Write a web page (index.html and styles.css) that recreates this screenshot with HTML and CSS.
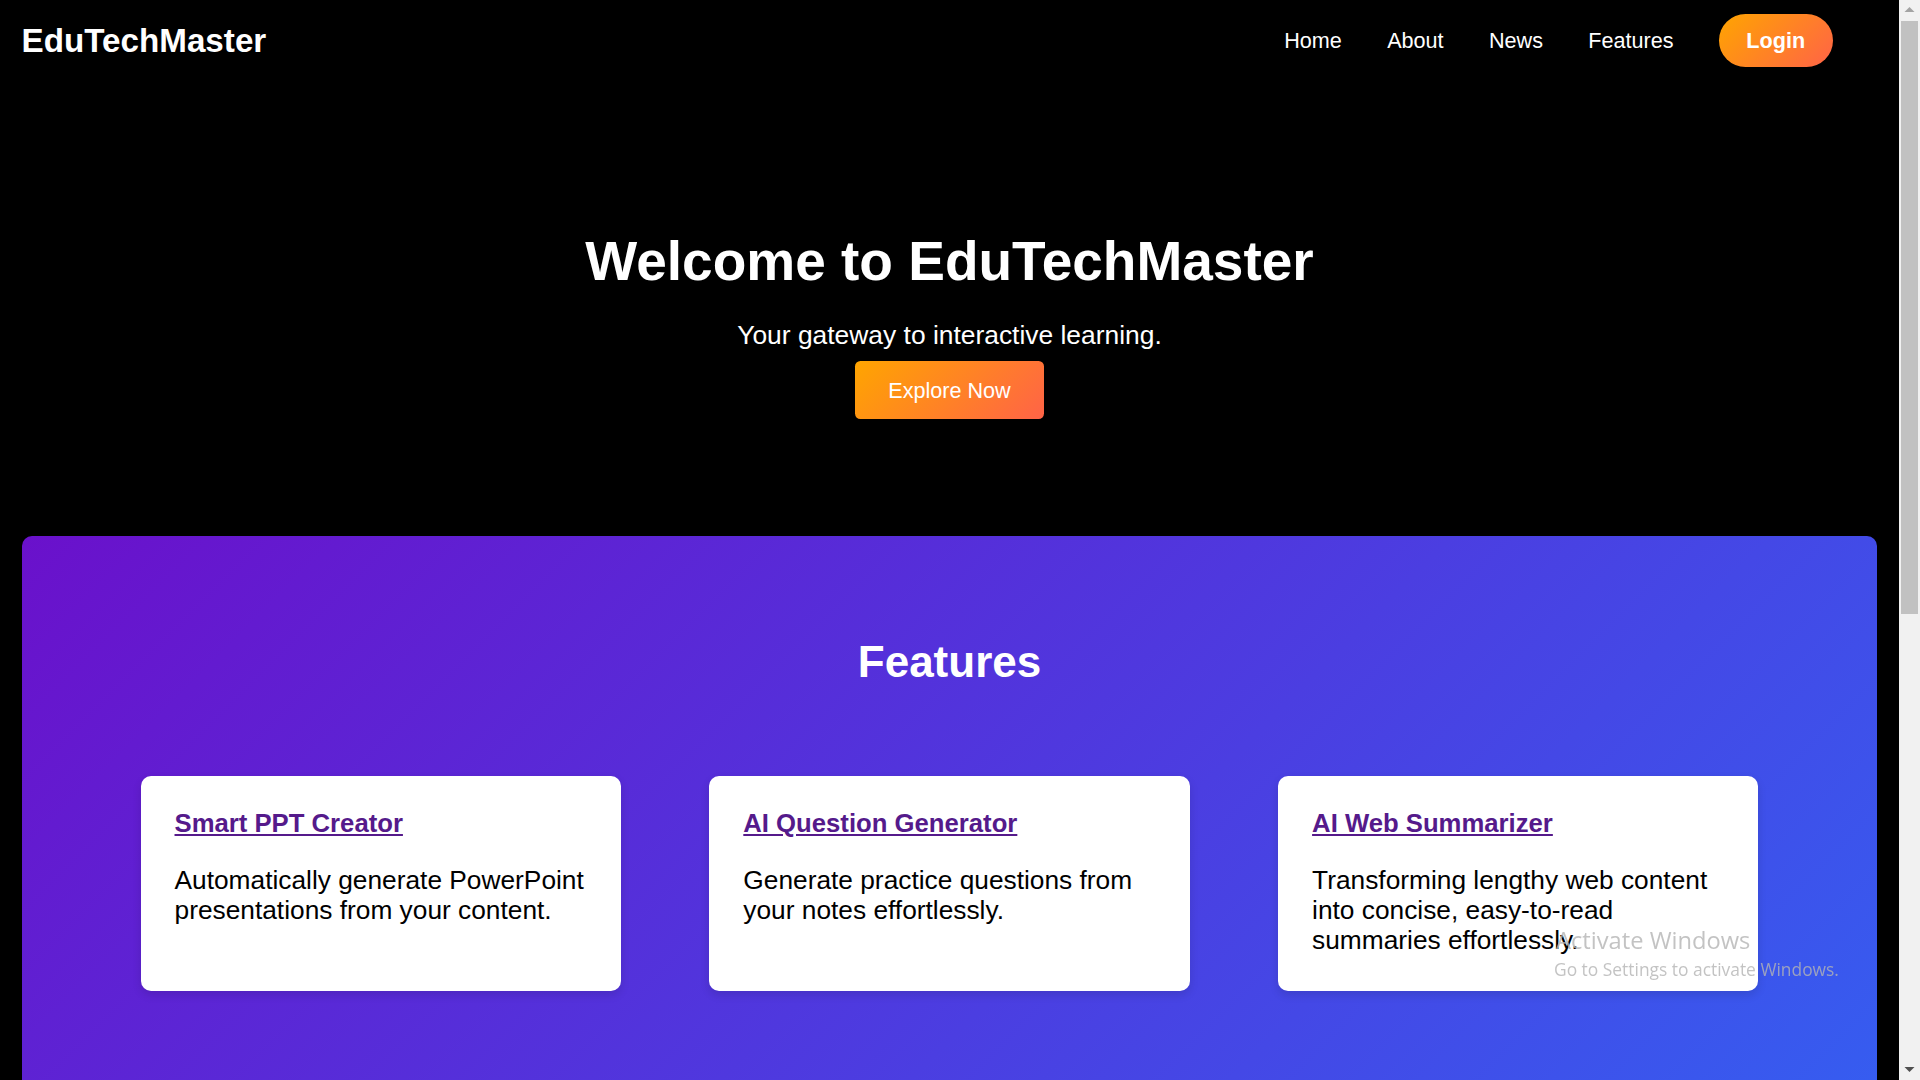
FILE: index.html
```html
<!DOCTYPE html>
<html lang="en">
<head>
<meta charset="utf-8">
<title>EduTechMaster</title>
<link rel="stylesheet" href="styles.css">
</head>
<body>
<div class="page">
  <header class="site-header">
    <div class="logo">EduTechMaster</div>
    <nav>
      <ul class="nav-list">
        <li><a class="nav-link" href="#">Home</a></li>
        <li><a class="nav-link" href="#">About</a></li>
        <li><a class="nav-link" href="#">News</a></li>
        <li><a class="nav-link" href="#">Features</a></li>
        <li><a class="login-btn" href="#">Login</a></li>
      </ul>
    </nav>
  </header>

  <section class="hero">
    <h1 class="hero-title">Welcome to EduTechMaster</h1>
    <p class="hero-sub">Your gateway to interactive learning.</p>
    <a class="explore-btn" href="#">Explore Now</a>
  </section>

  <section class="features">
    <h2 class="features-title">Features</h2>
    <div class="cards">
      <div class="card">
        <h3 class="card-title"><a href="#">Smart PPT Creator</a></h3>
        <p class="card-text">Automatically generate PowerPoint presentations from your content.</p>
      </div>
      <div class="card">
        <h3 class="card-title"><a href="#">AI Question Generator</a></h3>
        <p class="card-text">Generate practice questions from your notes effortlessly.</p>
      </div>
      <div class="card">
        <h3 class="card-title"><a href="#">AI Web Summarizer</a></h3>
        <p class="card-text">Transforming lengthy web content into concise, easy-to-read summaries effortlessly.</p>
      </div>
    </div>
  </section>
</div>

<div class="scrollbar">
  <div class="sb-btn">
    <svg width="21" height="21" viewBox="0 0 21 21"><polygon points="5.5,12 10.5,7 15.5,12" fill="#a3a3a3"/></svg>
  </div>
  <div class="sb-track">
    <div class="sb-thumb"></div>
  </div>
  <div class="sb-btn">
    <svg width="21" height="21" viewBox="0 0 21 21"><polygon points="5.5,8 15.5,8 10.5,13" fill="#505050"/></svg>
  </div>
</div>

<div class="watermark">
  <div class="wm-title">Activate Windows</div>
  <div class="wm-sub">Go to Settings to activate Windows.</div>
</div>
</body>
</html>
```

FILE: styles.css
```css
html, body {
  margin: 0;
  padding: 0;
  height: 100%;
}

body {
  display: flex;
  background: #000;
  color: #fff;
  font-family: "Liberation Sans", Arial, sans-serif;
  overflow: hidden;
}

.page {
  flex: 1;
  min-width: 0;
  height: 100vh;
  overflow: hidden;
}

/* Header */
.site-header {
  display: flex;
  align-items: center;
  justify-content: space-between;
  padding: 14px 66.5px 14px 21.6px;
}

.logo {
  font-size: 33.2px;
  line-height: 38px;
  font-weight: bold;
  color: #fff;
}

.nav-list {
  display: flex;
  align-items: center;
  gap: 45.4px;
  list-style: none;
  margin: 0;
  padding: 0;
}

.nav-link {
  color: #fff;
  text-decoration: none;
  font-size: 21.6px;
  line-height: 25px;
}

.login-btn {
  display: inline-block;
  padding: 14px 27.4px;
  border-radius: 30px;
  background: linear-gradient(135deg, #ffa500, #ff6347);
  color: #fff;
  font-size: 21.6px;
  line-height: 25px;
  font-weight: bold;
  text-decoration: none;
}

/* Hero */
.hero {
  display: flex;
  flex-direction: column;
  align-items: center;
  padding: 148.6px 0 116.6px;
  text-align: center;
}

.hero-title {
  margin: 0;
  font-size: 55px;
  line-height: 63px;
  font-weight: bold;
}

.hero-sub {
  margin: 27.5px 0 0;
  font-size: 26.4px;
  line-height: 30px;
}

.explore-btn {
  display: inline-block;
  margin-top: 11.4px;
  padding: 16.4px 33px;
  border-radius: 5.4px;
  background: linear-gradient(135deg, #ffa500, #ff6347);
  color: #fff;
  font-size: 21.6px;
  line-height: 25px;
  text-decoration: none;
}

/* Features */
.features {
  margin: 0 22px;
  min-height: 1330px;
  box-sizing: border-box;
  padding-top: 101.3px;
  border-radius: 10px;
  background: linear-gradient(135deg, #6a11cb 0%, #2575fc 100%);
}

.features-title {
  margin: 0;
  text-align: center;
  font-size: 44px;
  line-height: 50px;
  font-weight: bold;
  color: #fff;
}

.cards {
  display: flex;
  justify-content: center;
  gap: 88.4px;
  margin-top: 89px;
}

.card {
  width: 480.4px;
  box-sizing: border-box;
  padding: 33px 33px 35.8px 34px;
  background: #fff;
  border-radius: 10px;
  box-shadow: 0 4px 10px rgba(0, 0, 0, 0.12);
}

.card-title {
  margin: 0 0 26.7px;
  font-size: 25.7px;
  line-height: 29.4px;
  font-weight: bold;
}

.card-title a {
  color: #551a8b;
  text-decoration: underline;
}

.card-text {
  margin: 0;
  font-size: 26.3px;
  line-height: 30px;
  color: #000;
}

/* Fake browser scrollbar */
.scrollbar {
  width: 21px;
  height: 100vh;
  flex: none;
  display: flex;
  flex-direction: column;
  background: #f1f1f1;
}

.sb-btn {
  height: 21px;
  flex: none;
}

.sb-btn svg {
  display: block;
}

.sb-track {
  flex: 1;
  padding: 0 2px;
}

.sb-thumb {
  height: 593px;
  background: #c1c1c1;
}

/* OS watermark overlay */
.watermark {
  position: fixed;
  left: 1554px;
  top: 926px;
  font-family: "Open Sans", "Noto Sans", sans-serif;
  color: rgba(180, 180, 180, 0.8);
  pointer-events: none;
}

.wm-title {
  font-size: 23.7px;
  line-height: 28px;
  padding-left: 2px;
}

.wm-sub {
  margin-top: 5.4px;
  font-size: 17.4px;
  line-height: 20px;
}
```
